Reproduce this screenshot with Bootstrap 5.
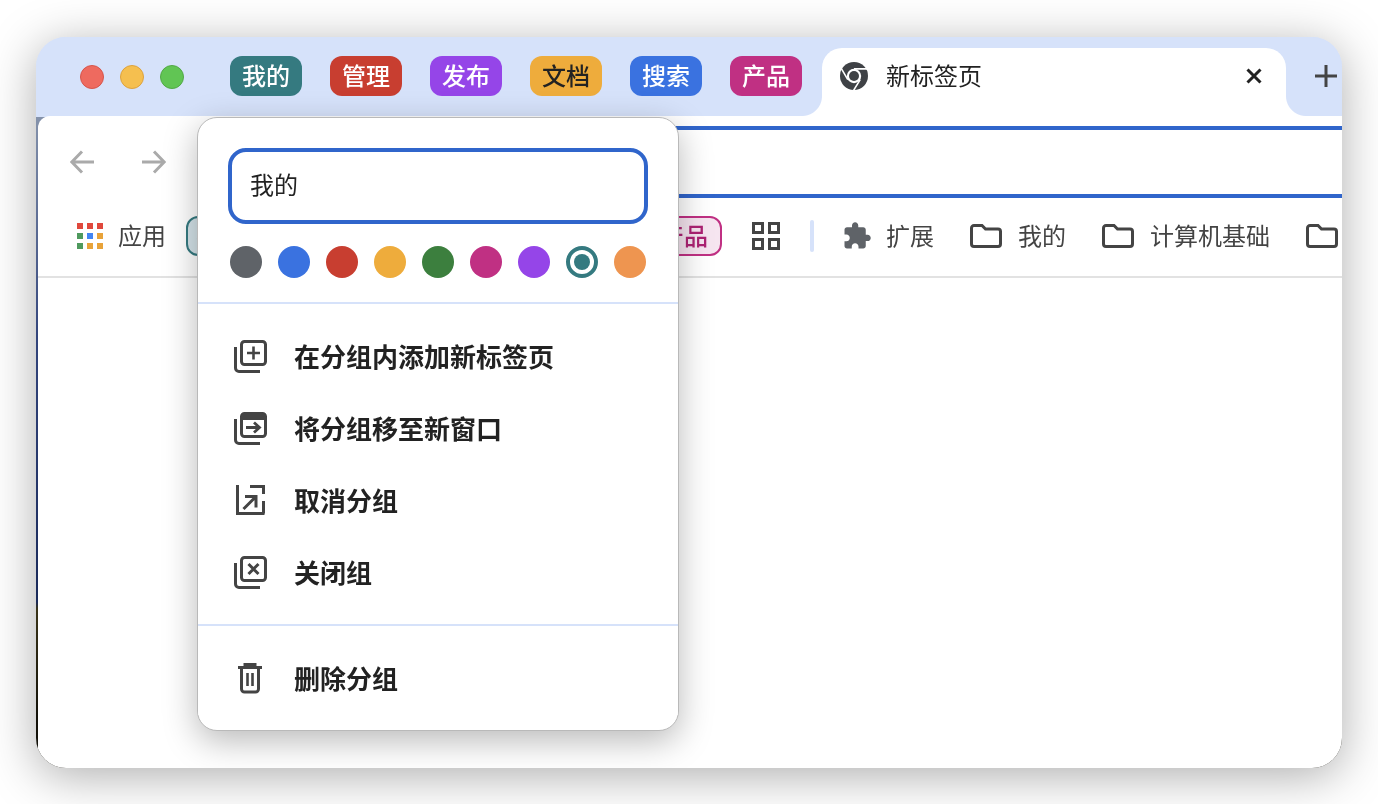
<!DOCTYPE html>
<html lang="zh-CN">
<head>
<meta charset="utf-8">
<title>Tab group editor</title>
<link href="https://cdn.jsdelivr.net/npm/bootstrap@5.3.0/dist/css/bootstrap.min.css" rel="stylesheet">
<style>
html, body { height: 100%; }
body { background: #fff; overflow: hidden; font-family: "Noto Sans CJK SC", "Liberation Sans", sans-serif; }
.win {
  position: relative; margin: 37px 0 0 36px; width: 1306px; height: 731px; padding-left: 2px;
  border-radius: 30px; overflow: hidden;
  background: linear-gradient(180deg, #d6e2fa 0, #d6e2fa 80px, #8492ab 80px, #33457c 300px, #1a2a5a 565px, #3a3418 572px, #14120a 680px);
}
.win-wrap { filter: drop-shadow(0 8px 24px rgba(0,0,0,.32)); }
.strip { height: 79px; background: #d6e2fa; margin-left: -2px; padding-left: 44px; }
.light { width: 24px; height: 24px; border-radius: 50%; margin-top: 28px; }
.lights { gap: 16px; margin-right: 46px; }
.l-r { background: #ee6a5f; border: 1px solid #d5554b; }
.l-y { background: #f5bf4f; border: 1px solid #dca23e; }
.l-g { background: #61c554; border: 1px solid #52a846; }
.tabs { gap: 28px; margin-top: 19px; margin-right: 20px; }
.glabel { width: 72px; height: 40px; border-radius: 12px; color: #fff; font-size: 24px; line-height: 38px; text-align: center; font-weight: 500; }
.g-teal { background: #357a80; } .g-red { background: #c83e30; } .g-purple { background: #9545e8; }
.g-yellow { background: #eeac3c; color: #222; } .g-blue { background: #3a72e0; } .g-pink { background: #c03083; }
.active-tab { position: relative; width: 464px; height: 68px; margin-top: 11px; background: #fff; border-radius: 20px 20px 0 0; padding: 0 24px 12px 18px; }
.active-tab::before, .active-tab::after { content: ""; position: absolute; bottom: 0; width: 20px; height: 20px; }
.active-tab::before { left: -20px; background: radial-gradient(circle at 0 0, #d6e2fa 19.5px, #fff 20.5px); }
.active-tab::after { right: -20px; background: radial-gradient(circle at 100% 0, #d6e2fa 19.5px, #fff 20.5px); }
.tab-title { font-size: 24px; color: #222; margin-left: 18px; padding-bottom: 2px; }
.plus { margin: 28px 0 0 29px; }
.page { background: #fff; height: 652px; border-top-left-radius: 12px; }
.tool-row { height: 90px; padding-left: 32px; }
.arrows { gap: 48px; margin: 34px 44px 0 0; }
.omni { margin-top: 10px; height: 72px; border-top: 4px solid #3065cb; border-bottom: 4px solid #3065cb; }
.mark-row { height: 72px; padding: 10px 0 20px 39px; border-bottom: 2px solid #e2e2e2; white-space: nowrap; overflow: hidden; color: #444; font-size: 24px; line-height: 36px; }
.mark-row > span { padding-bottom: 3px; }
.apps-txt { margin: 0 20px 0 15px; }
.chips { gap: 20.8px; }
.chip { width: 72px; height: 40px; border-radius: 12px; border: 2px solid; padding-right: 4px; text-align: center; font-size: 24px; line-height: 34px; font-weight: 500; }
.c-teal { border-color: #357a80; background: #d5e4ea; color: #2b6a70; }
.c-red { border-color: #c83e30; background: #f8e3e0; color: #b03226; }
.c-purple { border-color: #9545e8; background: #eee2fb; color: #8235d6; }
.c-yellow { border-color: #eeac3c; background: #fcf1dc; color: #a87214; }
.c-blue { border-color: #3a72e0; background: #e0e9fa; color: #2c60c8; }
.c-pink { border-color: #c03083; background: #f6e5f0; color: #ad2273; }
.grid-ic { margin-left: 30px; }
.sep { width: 4px; height: 32px; background: #d6e2fa; border-radius: 2px; margin: 0 28px 0 30px; }
.ext-txt { margin-left: 14px; margin-right: 36px; }
.fold-txt { margin-left: 16px; margin-right: 36px; }
.popup { position: absolute; left: 161px; top: 80px; width: 482px; height: 614px; background: #fff; border: 1px solid #b9b9b9; border-radius: 20px; box-shadow: 0 10px 34px rgba(0,0,0,.28); padding-top: 30px; overflow: hidden; }
.name-in.form-control { display: block; width: 420px; height: 76px; margin-left: 30px; border: 4px solid #3065cb; border-radius: 18px; padding: 0 18px 5px; font-size: 24px; color: #222; font-family: inherit; box-shadow: none; }
.dots { gap: 16px; margin: 22px 0 24px 32px; }
.dot { width: 32px; height: 32px; border-radius: 50%; }
.d-grey { background: #5f6368; } .d-blue { background: #3a72e0; } .d-red { background: #c83e30; } .d-yellow { background: #eeac3c; }
.d-green { background: #3c7f3e; } .d-pink { background: #c03083; } .d-purple { background: #9545e8; } .d-orange { background: #ee9550; }
.d-sel { border: 4px solid #357a80; padding: 4px; background: #fff; }
.d-sel::after { content: ""; display: block; width: 16px; height: 16px; border-radius: 50%; background: #357a80; }
.sect { border-top: 2px solid #d6e2fa; padding: 17px 0 15px; border-radius: 0; }
.sect.last { padding-bottom: 0; }
.mitem.list-group-item { height: 72px; padding: 0 0 0 35px; border: 0; font-size: 26px; font-weight: 700; color: #222; gap: 27px; }
.mitem span { padding-bottom: 4px; }
.mitem svg { flex: none; }
</style>
</head>
<body>
<div class="win-wrap">
<div class="win">
  <div class="strip d-flex align-items-start">
    <div class="lights d-flex">
      <div class="light l-r"></div><div class="light l-y"></div><div class="light l-g"></div>
    </div>
    <div class="tabs d-flex">
      <div class="glabel g-teal">我的</div>
      <div class="glabel g-red">管理</div>
      <div class="glabel g-purple">发布</div>
      <div class="glabel g-yellow">文档</div>
      <div class="glabel g-blue">搜索</div>
      <div class="glabel g-pink">产品</div>
    </div>
    <div class="active-tab d-flex align-items-center">
      <svg width="28" height="28" viewBox="0 0 28 28"><circle cx="14" cy="14" r="14" fill="#3f4246"/><circle cx="14" cy="14" r="7.2" fill="#fff"/><circle cx="14" cy="14" r="5" fill="#3f4246"/><path d="M14 6.9H27M20.2 17.6 13.7 28.2M7.8 17.6 1.4 6.6" stroke="#fff" stroke-width="1.6" fill="none"/></svg>
      <span class="tab-title">新标签页</span>
      <svg class="ms-auto" width="16" height="16" viewBox="0 0 16 16"><path d="M1.5 1.5 14.5 14.5M14.5 1.5 1.5 14.5" stroke="#222" stroke-width="3" fill="none"/></svg>
    </div>
    <svg class="plus" width="22" height="22" viewBox="0 0 22 22"><path d="M11 0V22M0 11H22" stroke="#444" stroke-width="3" fill="none"/></svg>
  </div>

  <div class="page">
    <div class="tool-row d-flex align-items-start">
      <div class="arrows d-flex">
        <svg width="24" height="24" viewBox="0 0 24 24"><path d="M24 12H2M12 1.5 1.8 12 12 22.5" stroke="#aaa" stroke-width="3" fill="none"/></svg>
        <svg width="24" height="24" viewBox="0 0 24 24"><path d="M0 12H22M12 1.5 22.2 12 12 22.5" stroke="#aaa" stroke-width="3" fill="none"/></svg>
      </div>
      <div class="omni flex-grow-1"></div>
    </div>

    <div class="mark-row d-flex align-items-center">
      <svg width="26" height="26" viewBox="0 0 26 26">
        <rect x="0" y="0" width="6" height="6" fill="#e0483c"/><rect x="10" y="0" width="6" height="6" fill="#e0483c"/><rect x="20" y="0" width="6" height="6" fill="#e0483c"/>
        <rect x="0" y="10" width="6" height="6" fill="#4f9a5e"/><rect x="10" y="10" width="6" height="6" fill="#4285f4"/><rect x="20" y="10" width="6" height="6" fill="#e8a33a"/>
        <rect x="0" y="20" width="6" height="6" fill="#4f9a5e"/><rect x="10" y="20" width="6" height="6" fill="#e8a33a"/><rect x="20" y="20" width="6" height="6" fill="#e8a33a"/>
      </svg>
      <span class="apps-txt">应用</span>
      <div class="chips d-flex">
        <div class="chip c-teal">我的</div>
        <div class="chip c-red">管理</div>
        <div class="chip c-purple">发布</div>
        <div class="chip c-yellow">文档</div>
        <div class="chip c-blue">搜索</div>
        <div class="chip c-pink">产品</div>
      </div>
      <svg class="grid-ic" width="28" height="28" viewBox="0 0 28 28" fill="none" stroke="#444" stroke-width="3"><rect x="1.5" y="1.5" width="9" height="9"/><rect x="17.5" y="1.5" width="9" height="9"/><rect x="1.5" y="17.5" width="9" height="9"/><rect x="17.5" y="17.5" width="9" height="9"/></svg>
      <div class="sep"></div>
      <svg width="30" height="30" viewBox="0 0 24 24"><path fill="#5f6368" d="M20.5 11H19V7c0-1.1-.9-2-2-2h-4V3.5C13 2.12 11.88 1 10.5 1S8 2.12 8 3.5V5H4c-1.1 0-1.99.9-1.99 2v3.8H3.5c1.49 0 2.7 1.21 2.7 2.7s-1.21 2.7-2.7 2.7H2V20c0 1.1.9 2 2 2h3.8v-1.5c0-1.49 1.21-2.7 2.7-2.7 1.49 0 2.7 1.21 2.7 2.7V22H17c1.1 0 2-.9 2-2v-4h1.5c1.38 0 2.5-1.12 2.5-2.5S21.88 11 20.5 11z"/></svg>
      <span class="ext-txt">扩展</span>
      <svg width="32" height="24" viewBox="0 0 32 24"><path d="M4 1.5H12L15.5 5H28A2.5 2.5 0 0 1 30.5 7.5V20A2.5 2.5 0 0 1 28 22.5H4A2.5 2.5 0 0 1 1.5 20V4A2.5 2.5 0 0 1 4 1.5Z" fill="none" stroke="#444" stroke-width="3"/></svg>
      <span class="fold-txt">我的</span>
      <svg width="32" height="24" viewBox="0 0 32 24"><path d="M4 1.5H12L15.5 5H28A2.5 2.5 0 0 1 30.5 7.5V20A2.5 2.5 0 0 1 28 22.5H4A2.5 2.5 0 0 1 1.5 20V4A2.5 2.5 0 0 1 4 1.5Z" fill="none" stroke="#444" stroke-width="3"/></svg>
      <span class="fold-txt">计算机基础</span>
      <svg width="32" height="24" viewBox="0 0 32 24"><path d="M4 1.5H12L15.5 5H28A2.5 2.5 0 0 1 30.5 7.5V20A2.5 2.5 0 0 1 28 22.5H4A2.5 2.5 0 0 1 1.5 20V4A2.5 2.5 0 0 1 4 1.5Z" fill="none" stroke="#444" stroke-width="3"/></svg>
    </div>
  </div>

  <div class="popup">
    <input class="form-control name-in" type="text" value="我的" aria-label="分组名称">
    <div class="dots d-flex">
      <div class="dot d-grey"></div><div class="dot d-blue"></div><div class="dot d-red"></div>
      <div class="dot d-yellow"></div><div class="dot d-green"></div><div class="dot d-pink"></div>
      <div class="dot d-purple"></div><div class="dot d-sel"></div><div class="dot d-orange"></div>
    </div>
    <div class="sect list-group list-group-flush">
      <div class="mitem list-group-item d-flex align-items-center">
        <svg width="34" height="34" viewBox="0 0 34 34" fill="none" stroke="#444" stroke-width="3"><rect x="8.5" y="1.5" width="24" height="23" rx="3"/><path d="M2.5 7V28A3.5 3.5 0 0 0 6 31.5H27"/><path d="M20.5 6.5V19.5M14 13H27" stroke-width="2.6"/></svg>
        <span>在分组内添加新标签页</span>
      </div>
      <div class="mitem list-group-item d-flex align-items-center">
        <svg width="34" height="34" viewBox="0 0 34 34" fill="none" stroke="#444" stroke-width="3"><rect x="8.5" y="1.5" width="24" height="23" rx="3"/><path d="M8.5 5H32.5" stroke-width="6"/><path d="M2.5 7V28A3.5 3.5 0 0 0 6 31.5H27"/><path d="M13 15.5H26M21 10.5 26.5 15.5 21 20.5" stroke-width="2.8"/></svg>
        <span>将分组移至新窗口</span>
      </div>
      <div class="mitem list-group-item d-flex align-items-center">
        <svg width="34" height="34" viewBox="0 0 34 34" fill="none" stroke="#444" stroke-width="3"><path d="M4.5 1V29.5H31.5M30.5 29.5V17M17 2.5H30.5V10"/><path d="M10.5 25 22 13.5M12 12.5H23V23.5" stroke-width="3"/></svg>
        <span>取消分组</span>
      </div>
      <div class="mitem list-group-item d-flex align-items-center">
        <svg width="34" height="34" viewBox="0 0 34 34" fill="none" stroke="#444" stroke-width="3"><rect x="8.5" y="1.5" width="24" height="23" rx="3"/><path d="M2.5 7V28A3.5 3.5 0 0 0 6 31.5H27"/><path d="M15.5 8 25.5 18M25.5 8 15.5 18" stroke-width="3"/></svg>
        <span>关闭组</span>
      </div>
    </div>
    <div class="sect last list-group list-group-flush">
      <div class="mitem list-group-item d-flex align-items-center">
        <svg width="34" height="34" viewBox="0 0 34 34" fill="none" stroke="#444" stroke-width="3"><path d="M5 5.5H29M12 5.5V2.5H22V5.5"/><path d="M8.5 5.5V27A3 3 0 0 0 11.5 30H22.5A3 3 0 0 0 25.5 27V5.5"/><path d="M14.5 11V24M19.5 11V24" stroke-width="2.6"/></svg>
        <span>删除分组</span>
      </div>
    </div>
  </div>
</div>
</div>
<script src="https://cdn.jsdelivr.net/npm/bootstrap@5.3.0/dist/js/bootstrap.bundle.min.js"></script>
</body>
</html>
